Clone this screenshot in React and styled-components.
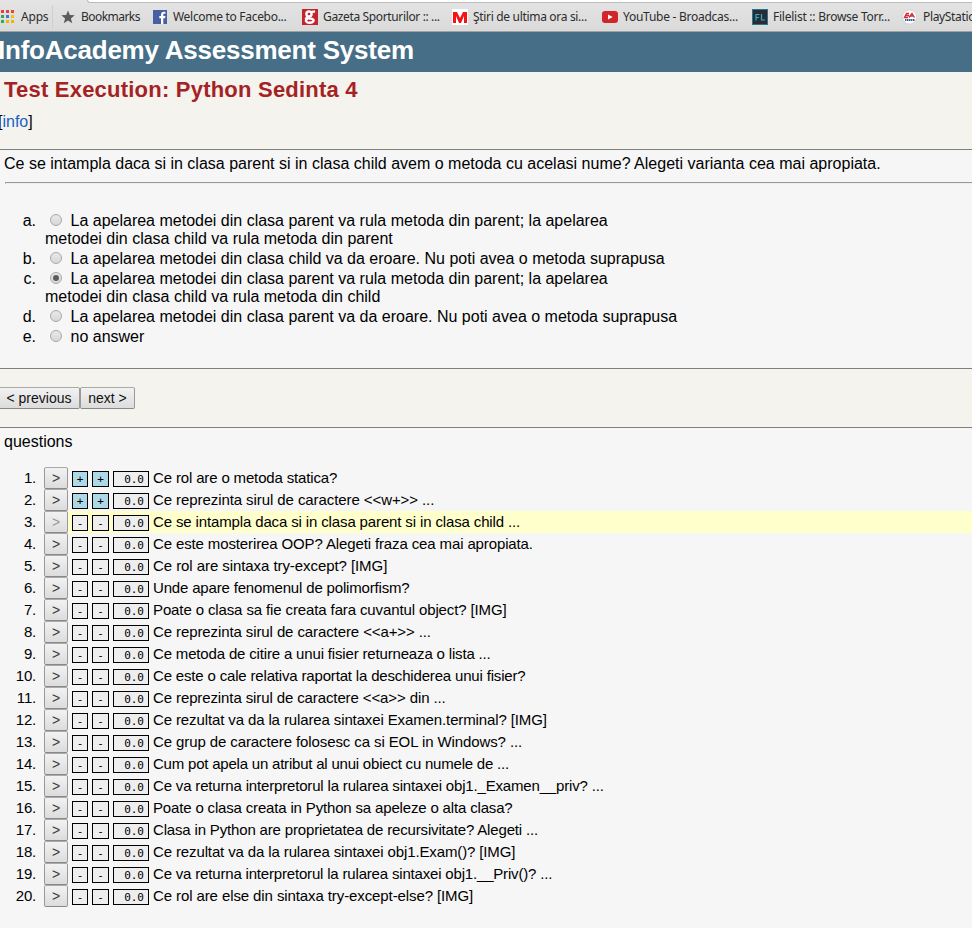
import React from "react";
import styled, { createGlobalStyle } from "styled-components";

const GlobalStyle = createGlobalStyle`
  html, body { margin: 0; padding: 0; overflow: hidden; }
  body { background: #f6f6f6; color: #000; font: 16px/18px "Liberation Sans", Arial, sans-serif; }
  * { box-sizing: border-box; }
`;

const Page = styled.div`
  width: 972px;
  height: 928px;
  display: flex;
  flex-direction: column;
  overflow: hidden;
  background: #f5f3ee;
`;

const BookmarkBar = styled.nav`
  height: 32px;
  flex: none;
  display: flex;
  flex-direction: column;
  background: linear-gradient(#e4e4e4, #dadada);
  border-bottom: 1px solid #a0a0a0;
`;
const AddressEdge = styled.div`
  height: 3px;
  flex: none;
  margin-left: 87px;
  background: #fff;
  border: 1px solid #bcbcbc;
  border-width: 0 0 1px 1px;
  border-bottom-left-radius: 3px;
`;
const BookmarkRow = styled.div`
  display: flex;
  height: 28px;
  align-items: center;
`;
const Bookmark = styled.div`
  flex: none;
  width: ${(p) => p.$w}px;
  height: 24px;
  padding-left: ${(p) => p.$inset || 0}px;
  display: flex;
  align-items: center;
  border-right: ${(p) => (p.$edge ? "1px solid #cfcfcf" : "none")};
  svg { flex: none; width: 16px; height: 16px; margin-right: 5px; display: block; }
`;
const BookmarkText = styled.span`
  font: 12px/16px "Noto Sans", sans-serif;
  letter-spacing: ${(p) => p.$ls || 0}px;
  color: #2c2c2c;
  white-space: nowrap;
`;

const Header = styled.header`
  height: 40px;
  flex: none;
  background: #476e87;
  color: #fff;
  font-size: 26px;
  font-weight: bold;
  line-height: 36px;
  letter-spacing: -0.23px;
  text-indent: -2px;
  white-space: nowrap;
`;
const Title = styled.h1`
  margin: 0;
  padding-left: 4px;
  height: 35px;
  flex: none;
  font-size: 22px;
  line-height: 35px;
  letter-spacing: 0.22px;
  color: #a52224;
`;
const Info = styled.div`
  height: 42px;
  flex: none;
  line-height: 30px;
  text-indent: -2px;
  a { color: #1a5fc4; }
`;
const Panel = styled.section`
  flex: none;
  height: ${(p) => p.$h}px;
  background: #f6f6f6;
  border-top: 1px solid #7f7f7f;
  border-bottom: ${(p) => (p.$last ? "none" : "1px solid #7f7f7f")};
`;
const Question = styled.p`
  margin: 0;
  padding: 5px 0 0 4px;
  height: 32px;
  letter-spacing: 0.005px;
  white-space: nowrap;
`;
const Rule = styled.div`
  height: 2px;
  margin-left: 5px;
  border: 1px solid #999;
  border-width: 1px 0 0 1px;
  border-bottom: 1px solid #eee;
`;
const Answers = styled.ol`
  list-style: none;
  margin: 27px 0 0;
  padding: 0;
`;
const Answer = styled.li`
  display: flex;
  min-height: 20px;
  padding-top: 1px;
  padding-bottom: 1px;
`;
const Marker = styled.span`
  flex: none;
  width: 45px;
  padding-right: 9px;
  text-align: right;
`;
const AnswerText = styled.label`
  width: 650px;
  white-space: pre-line;
`;
const Radio = styled.span`
  display: inline-flex;
  align-items: center;
  justify-content: center;
  width: 12px;
  height: 12px;
  margin: -3px 8.500px 0 5px;
  vertical-align: 1px;
  border: 1px solid #a9a9a9;
  border-radius: 50%;
  background: linear-gradient(#e8e8e8, #d8d8d8);
  &::after {
    content: "";
    width: 6px;
    height: 6px;
    border-radius: 50%;
    background: ${(p) => (p.$on ? "#5c5c5c" : "transparent")};
  }
`;
const RadioSlot = styled.span`
  display: inline-flex;
  height: 12px;
  vertical-align: 3px;
  line-height: 12px;
  margin-top: -4px;
`;

const Navigation = styled.div`
  height: 58px;
  flex: none;
  display: flex;
  align-items: flex-start;
  padding-top: 18px;
  margin-left: -2px;
`;
const Button = styled.button`
  width: ${(p) => p.$w}px;
  height: 22px;
  flex: none;
  margin: 0;
  padding: 0;
  border: 1px solid #999;
  border-top-color: #aaa;
  border-radius: 2px;
  border-bottom-color: #888;
  background: linear-gradient(#f2f2f2, #dcdcdc);
  color: ${(p) => (p.$muted ? "#999" : "#111")};
  font: 14px/18px "Liberation Sans", Arial, sans-serif;
  white-space: nowrap;
`;
const JumpButton = styled(Button)`
  color: ${(p) => (p.$muted ? "#999" : "#3a3a3a")};
`;

const ListLabel = styled.div`
  height: 39px;
  padding: 5px 0 0 4px;
`;
const Questions = styled.ol`
  list-style: none;
  margin: 0;
  padding: 0;
`;
const Row = styled.li`
  display: flex;
  height: 22px;
  font-size: 15px;
`;
const RowNumber = styled.span`
  width: 44px;
  padding-right: 8px;
  flex: none;
  text-align: right;
  line-height: 22px;
  letter-spacing: -0.2px;
`;
const RowBody = styled.div`
  flex: 1;
  display: flex;
  align-items: center;
  padding-left: 4px;
  background: ${(p) => (p.$current ? "#ffffcc" : "transparent")};
`;
const Mark = styled.span`
  flex: none;
  width: ${(p) => p.$w}px;
  height: 16px;
  margin: 2px 4px 0 0;
  padding-right: ${(p) => (p.$score ? "4px" : "0")};
  border: 1px solid #000;
  background: ${(p) => (p.$on ? "#add8e6" : "#eee")};
  font: 11px/15px "DejaVu Sans Mono", monospace;
  text-align: ${(p) => (p.$score ? "right" : "center")};
`;
const RowText = styled.span`
  line-height: 22px;
  letter-spacing: ${(p) => p.$ls || 0}px;
  white-space: nowrap;
`;

const appColors = ["#ea4335", "#ea4335", "#ea4335", "#34a853", "#2a7de1", "#fbbc05", "#34a853", "#f2b400", "#f2b400"];
const AppsIcon = () => (
  <svg viewBox="0 0 16 16">
    {appColors.map((c, i) => <rect key={i} x={1 + (i % 3) * 5} y={1 + Math.floor(i / 3) * 5} width="3" height="3" fill={c} />)}
  </svg>
);
const StarIcon = () => (
  <svg viewBox="0 0 16 16"><path fill="#5a5a5a" d="M8 1.500l1.800 4.600 4.900.2-3.800 3.100 1.300 4.800L8 11.500l-4.200 2.700 1.300-4.800L1.300 6.300l4.900-.2z" /></svg>
);
const FacebookIcon = () => (
  <svg viewBox="0 0 16 16"><rect x="1" y="1" width="14" height="14" fill="#4660a0" /><path fill="#fff" d="M9 15V9.200H7.300V7.100H9V5.600C9 3.700 10.100 2.700 11.700 2.700h1.700v2.100h-1.100c-.8 0-1 .4-1 1v1.300h2.100l-.3 2.100h-1.800V15z" /></svg>
);
const GazetaIcon = () => (
  <svg viewBox="0 0 16 16"><rect width="16" height="16" fill="#c4242b" /><g fill="none" stroke="#fff" strokeWidth="2.400"><ellipse cx="7" cy="5" rx="2.600" ry="2.500" /><path d="M9 3.200L13 2.300M5.500 7.500L4.500 9l5.500.8c3 1 1.500 4-2.300 4s-5.200-2.800-2-4" /></g></svg>
);
const MIcon = () => (
  <svg viewBox="0 0 16 16"><rect width="16" height="16" fill="#fff" /><path fill="#f41414" d="M1 14V3h4l3 6 3-6h4v11h-3V7l-3 7H7L4 7v7z" /></svg>
);
const YouTubeIcon = () => (
  <svg viewBox="0 0 16 16"><rect y="2" width="16" height="12" rx="3" fill="#d2252b" /><path fill="#fff" d="M6 5.500v5L10.700 8z" /></svg>
);
const FilelistIcon = () => (
  <svg viewBox="0 0 16 16"><rect x=".5" y=".5" width="15" height="15" fill="#292d31" stroke="#287493" /><path fill="none" stroke="#2cabd8" strokeWidth="1.200" d="M4 11.500v-6h3.500M4 8.500h3M9.500 5v6H13" /></svg>
);
const EaIcon = () => (
  <svg viewBox="0 0 16 16"><circle cx="7.500" cy="8" r="7" fill="#fff" stroke="#ccc" strokeWidth=".7" /><path fill="none" stroke="#cf3038" strokeWidth="1.400" d="M7 4.500H4.500L2.500 8.500h3.500M4 6.500h3M7 8.500l3-4 2.500 4M8.500 7h2.500" /><path stroke="#3b5c9b" strokeWidth="1.800" strokeDasharray="1.500 .5" d="M3 11h9.500" /></svg>
);

const bookmarks = [
  { icon: AppsIcon, text: "Apps", w: 53, edge: true, ls: -0.2 },
  { icon: StarIcon, text: "Bookmarks", w: 99, inset: 7, ls: -0.55 },
  { icon: FacebookIcon, text: "Welcome to Facebo...", w: 150, ls: -0.3 },
  { icon: GazetaIcon, text: "Gazeta Sporturilor :: ...", w: 150, ls: -0.36 },
  { icon: MIcon, text: "Ştiri de ultima ora si...", w: 150, ls: -0.32 },
  { icon: YouTubeIcon, text: "YouTube - Broadcas...", w: 150, ls: -0.26 },
  { icon: FilelistIcon, text: "Filelist :: Browse Torr...", w: 150, ls: -0.25 },
  { icon: EaIcon, text: "PlayStation", w: 150, ls: -0.35 },
];

const answers = [
  ["a.", "La apelarea metodei din clasa parent va rula metoda din parent; la apelarea\nmetodei din clasa child va rula metoda din parent"],
  ["b.", "La apelarea metodei din clasa child va da eroare. Nu poti avea o metoda suprapusa"],
  ["c.", "La apelarea metodei din clasa parent va rula metoda din parent; la apelarea\nmetodei din clasa child va rula metoda din child"],
  ["d.", "La apelarea metodei din clasa parent va da eroare. Nu poti avea o metoda suprapusa"],
  ["e.", "no answer"],
];

const questions = [
  ["Ce rol are o metoda statica?", -0.15],
  ["Ce reprezinta sirul de caractere <<w+>> ...", -0.08],
  ["Ce se intampla daca si in clasa parent si in clasa child ...", -0.135],
  ["Ce este mosterirea OOP? Alegeti fraza cea mai apropiata.", -0.125],
  ["Ce rol are sintaxa try-except? [IMG]", -0.07],
  ["Unde apare fenomenul de polimorfism?", -0.17],
  ["Poate o clasa sa fie creata fara cuvantul object? [IMG]", -0.12],
  ["Ce reprezinta sirul de caractere <<a+>> ...", -0.1],
  ["Ce metoda de citire a unui fisier returneaza o lista ...", -0.165],
  ["Ce este o cale relativa raportat la deschiderea unui fisier?", -0.17],
  ["Ce reprezinta sirul de caractere <<a>> din ...", -0.11],
  ["Ce rezultat va da la rularea sintaxei Examen.terminal? [IMG]", -0.12],
  ["Ce grup de caractere folosesc ca si EOL in Windows? ...", -0.1],
  ["Cum pot apela un atribut al unui obiect cu numele de ...", -0.21],
  ["Ce va returna interpretorul la rularea sintaxei obj1._Examen__priv? ...", -0.17],
  ["Poate o clasa creata in Python sa apeleze o alta clasa?", -0.165],
  ["Clasa in Python are proprietatea de recursivitate? Alegeti ...", -0.165],
  ["Ce rezultat va da la rularea sintaxei obj1.Exam()? [IMG]", -0.125],
  ["Ce va returna interpretorul la rularea sintaxei obj1.__Priv()? ...", -0.18],
  ["Ce rol are else din sintaxa try-except-else? [IMG]", -0.1],
];

export default function App() {
  return (
    <Page>
      <GlobalStyle />
      <BookmarkBar>
        <AddressEdge />
        <BookmarkRow>
          {bookmarks.map(({ icon: Icon, text, w, edge, inset, ls }) => (
            <Bookmark key={text} $w={w} $edge={edge} $inset={inset}>
              <Icon />
              <BookmarkText $ls={ls}>{text}</BookmarkText>
            </Bookmark>
          ))}
        </BookmarkRow>
      </BookmarkBar>
      <Header>InfoAcademy Assessment System</Header>
      <Title>Test Execution: Python Sedinta 4</Title>
      <Info>[<a>info</a>]</Info>
      <Panel $h={220}>
        <Question>Ce se intampla daca si in clasa parent si in clasa child avem o metoda cu acelasi nume? Alegeti varianta cea mai apropiata.</Question>
        <Rule />
        <Answers>
          {answers.map(([marker, text], i) => (
            <Answer key={marker}>
              <Marker>{marker}</Marker>
              <AnswerText><RadioSlot><Radio $on={i === 2} /></RadioSlot>{text}</AnswerText>
            </Answer>
          ))}
        </Answers>
      </Panel>
      <Navigation>
        <Button $w={82}>&lt; previous</Button>
        <Button $w={55}>next &gt;</Button>
      </Navigation>
      <Panel $h={501} $last>
        <ListLabel>questions</ListLabel>
        <Questions>
          {questions.map(([text, ls], i) => (
            <Row key={text}>
              <RowNumber>{i + 1}.</RowNumber>
              <JumpButton $w={24} $muted={i === 2}>&gt;</JumpButton>
              <RowBody $current={i === 2}>
                <Mark $w={16} $on={i < 2}>{i < 2 ? "+" : "-"}</Mark>
                <Mark $w={17} $on={i < 2}>{i < 2 ? "+" : "-"}</Mark>
                <Mark $w={36} $score>0.0</Mark>
                <RowText $ls={ls}>{text}</RowText>
              </RowBody>
            </Row>
          ))}
        </Questions>
      </Panel>
    </Page>
  );
}
